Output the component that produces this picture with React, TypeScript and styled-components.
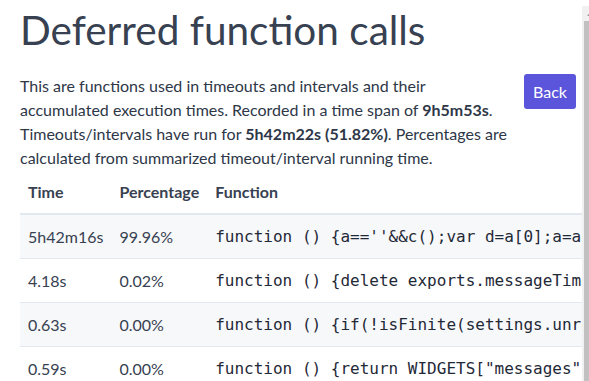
import React from 'react';
import styled, { createGlobalStyle } from 'styled-components';

const GlobalStyle = createGlobalStyle`
  html, body {
    margin: 0;
    padding: 0;
    overflow: hidden;
    background: #ffffff;
  }
`;

const rows = [
  { time: '5h42m16s', pct: '99.96%', fn: "function () {a==''&&c();var d=a[0];a=a.slice(1);d.call(b)}" },
  { time: '4.18s', pct: '0.02%', fn: 'function () {delete exports.messageTimeout;exports.update()}' },
  { time: '0.63s', pct: '0.00%', fn: 'function () {if(!isFinite(settings.unreadTimeout))return;}' },
  { time: '0.59s', pct: '0.00%', fn: 'function () {return WIDGETS["messages"].draw()}' },
];

export default function App() {
  return (
    <>
      <GlobalStyle />
      <Shell>
        <Page>
          <Title>Deferred function calls</Title>
          <Intro>
            <Description>
              This are functions used in timeouts and intervals and their accumulated execution
              times. Recorded in a time span of <b>9h5m53s</b>. Timeouts/intervals have run for{' '}
              <b>5h42m22s (51.82%)</b>. Percentages are calculated from summarized
              timeout/interval running time.
            </Description>
            <BackButton>Back</BackButton>
          </Intro>
          <Table>
            <thead>
              <tr>
                <Th>Time</Th>
                <Th>Percentage</Th>
                <Th>Function</Th>
              </tr>
            </thead>
            <tbody>
              {rows.map((r, i) => (
                <tr key={i}>
                  <Td $striped={i % 2 === 0}>{r.time}</Td>
                  <Td $striped={i % 2 === 0}>{r.pct}</Td>
                  <Code $striped={i % 2 === 0}>{r.fn}</Code>
                </tr>
              ))}
            </tbody>
          </Table>
        </Page>
        <Scrollbar>
          <ScrollArrow>
            <svg width="8" height="6" viewBox="0 0 8 6">
              <path d="M4 1 L7 5 L1 5 Z" fill="#a3a3a3" />
            </svg>
          </ScrollArrow>
          <ScrollThumb />
        </Scrollbar>
      </Shell>
    </>
  );
}

const Shell = styled.div`
  display: flex;
  width: 597px;
  height: 381px;
  font-family: 'Lato', sans-serif;
  color: #2d3748;
`;

const Page = styled.div`
  width: 562px;
  flex: none;
  overflow: hidden;
  padding: 6px 0 0 20px;
`;

const Scrollbar = styled.div`
  flex: none;
  display: flex;
  flex-direction: column;
  width: 15px;
  margin-top: 6px;
  background: #f1f1f1;
`;

const ScrollArrow = styled.div`
  height: 15px;
  display: flex;
  align-items: center;
  justify-content: center;
`;

const ScrollThumb = styled.div`
  flex: 1;
  margin: 0 2px;
  background: #c1c1c1;
`;

const Title = styled.h1`
  margin: 0;
  font-size: 40.5px;
  font-weight: 400;
  line-height: 48px;
  color: #374151;
`;

const Intro = styled.div`
  display: flex;
  align-items: flex-start;
  gap: 8px;
  margin-top: 20px;
`;

const Description = styled.p`
  margin: 0;
  width: 496px;
  font-size: 16px;
  line-height: 24px;
  b {
    font-weight: 700;
  }
`;

const BackButton = styled.button`
  flex: none;
  padding: 0 9px;
  height: 35px;
  border: none;
  border-radius: 3px;
  background: #5a55da;
  color: #ffffff;
  font-family: 'Lato', sans-serif;
  font-size: 16px;
`;

const Table = styled.table`
  margin-top: 5px;
  border-collapse: separate;
  border-spacing: 0;
  white-space: nowrap;
`;

const Th = styled.th`
  padding: 5px 8px 9px;
  line-height: 24px;
  text-align: left;
  font-size: 16px;
  font-weight: 700;
  color: #374151;
  border-bottom: 2px solid #e2e8f0;
`;

const Td = styled.td<{ $striped: boolean }>`
  padding: 10px 8px 9px;
  line-height: 24px;
  font-size: 16px;
  color: #374151;
  background: ${(p) => (p.$striped ? '#f7f8fa' : '#ffffff')};
  border-bottom: 1px solid #e2e8f0;
`;

const Code = styled(Td)`
  font-family: 'DejaVu Sans Mono', monospace;
  color: #1f2937;
`;
